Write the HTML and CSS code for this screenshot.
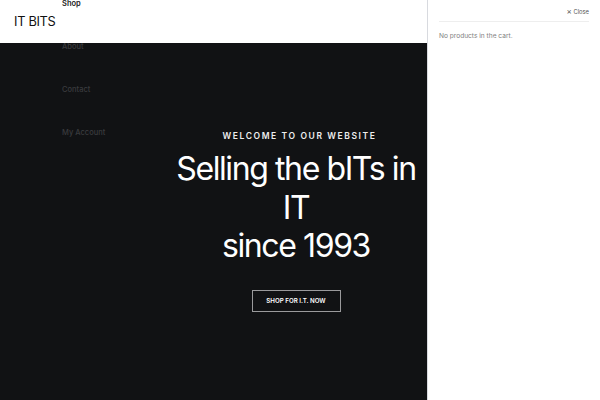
FILE: index.html
```html
<!DOCTYPE html>
<html>
<head>
<meta charset="utf-8">
<link rel="stylesheet" href="styles.css">
</head>
<body>
<div class="page">
  <header class="site-header">
    <div class="logo">IT BITS</div>
    <ul class="nav">
      <li class="nav-item active">Shop</li>
      <li class="nav-item">About</li>
      <li class="nav-item">Contact</li>
      <li class="nav-item">My Account</li>
    </ul>
  </header>
  <section class="hero">
    <div class="hero-inner">
      <p class="eyebrow">WELCOME TO OUR WEBSITE</p>
      <h1 class="title">Selling the bITs in IT<br>since 1993</h1>
      <a class="cta">SHOP FOR I.T. NOW</a>
    </div>
  </section>
</div>
<aside class="cart">
  <div class="cart-top">
    <span class="close"><span class="x">×</span> Close</span>
  </div>
  <p class="empty">No products in the cart.</p>
</aside>
</body>
</html>
```
FILE: styles.css
```css
html, body {
  margin: 0;
  padding: 0;
  height: 100%;
  overflow: hidden;
}
body {
  font-family: Inter, "Liberation Sans", sans-serif;
  background: #fff;
}
.page {
  width: 600px;
  height: 400px;
  display: flex;
  flex-direction: column;
}
.site-header {
  position: relative;
  height: 43px;
  flex: none;
  background: #fff;
  display: flex;
  align-items: center;
  padding-left: 14px;
}
.logo {
  font-size: 12.8px;
  color: #111;
  letter-spacing: -0.3px;
}
.nav {
  position: absolute;
  left: 62px;
  top: -1.5px;
  margin: 0;
  padding: 0;
  list-style: none;
  z-index: 2;
}
.nav-item {
  height: 43px;
  font-size: 7.5px;
  line-height: 10px;
  color: #3a3b3e;
  font-weight: 500;
}
.nav-item.active {
  color: #222;
  font-weight: 600;
}
.hero {
  flex: 1;
  background: #111214;
  display: flex;
  justify-content: center;
  padding-right: 8px;
}
.hero-inner {
  display: flex;
  flex-direction: column;
  align-items: center;
  padding-top: 87px;
}
.eyebrow {
  margin: 0 0 0 7px;
  color: #eee;
  font-size: 8.5px;
  font-weight: 600;
  letter-spacing: 1.6px;
  line-height: 12px;
}
.title {
  margin: 8px 0 0;
  width: 260px;
  text-align: center;
  color: #fff;
  font-weight: 400;
  font-size: 32px;
  line-height: 38.5px;
  letter-spacing: -1.4px;
}
.cta {
  margin-top: 24px;
  width: 87px;
  height: 20px;
  border: 1px solid #9a9a9c;
  display: flex;
  align-items: center;
  justify-content: center;
  color: #fff;
  font-size: 6.2px;
  font-weight: 600;
}
.cart {
  position: fixed;
  top: 0;
  right: 0;
  width: 173px;
  height: 400px;
  background: #fff;
  border-left: 1px solid #d8dadf;
  box-sizing: border-box;
  padding: 0 11px 0 11px;
}
.cart-top {
  height: 21px;
  border-bottom: 1px solid #eee;
  display: flex;
  justify-content: flex-end;
  align-items: center;
}
.close {
  font-size: 5.8px;
  color: #555;
  padding-top: 1px;
}
.x {
  font-size: 8px;
}
.empty {
  margin: 10px 0 0;
  font-size: 6.6px;
  color: #808080;
}
```
